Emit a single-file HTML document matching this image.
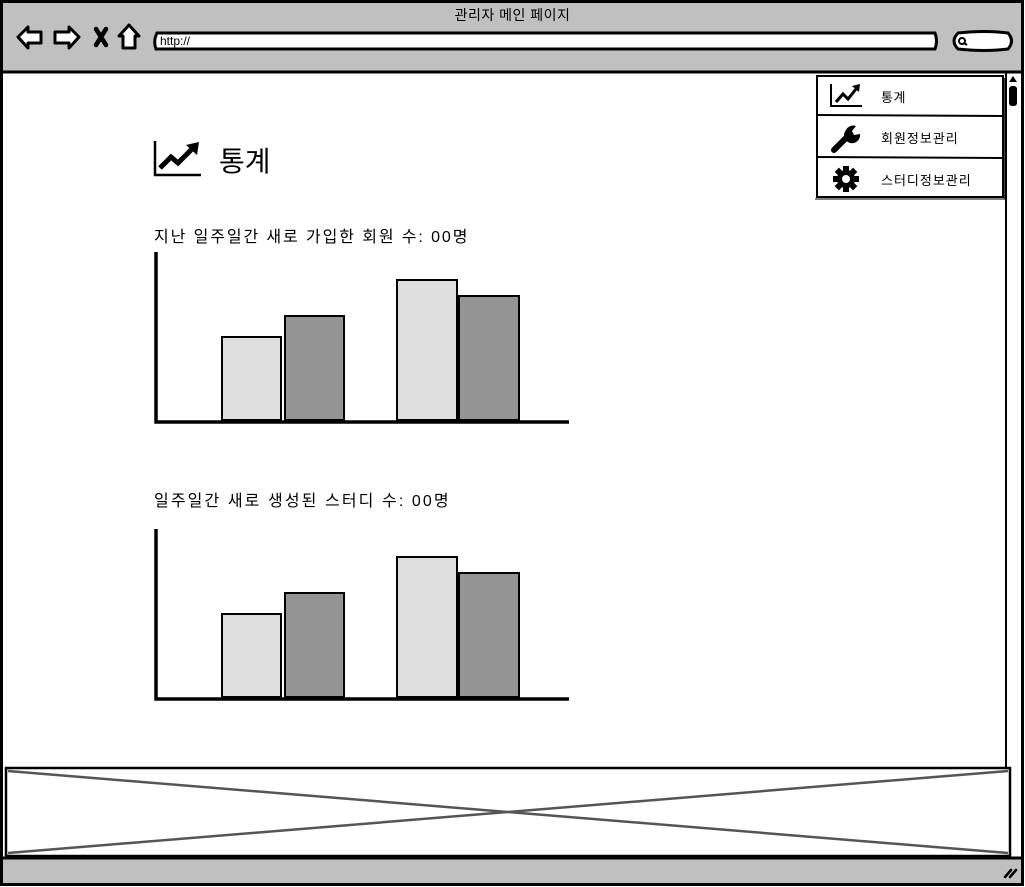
<!DOCTYPE html>
<html><head><meta charset="utf-8"><style>
html,body{margin:0;padding:0;background:#fff;}
body{width:1025px;height:887px;position:relative;overflow:hidden;font-family:"Liberation Sans","Noto Sans CJK KR",sans-serif;}
svg{position:absolute;left:0;top:0;}
.t{position:absolute;white-space:nowrap;color:#000;}
</style></head><body>
<svg width="1025" height="887" viewBox="0 0 1025 887">
<rect x="1.5" y="1.5" width="1021" height="883" fill="#fff" stroke="#000" stroke-width="3"/>
<rect x="3" y="3" width="1018" height="68" fill="#c0c0c0"/>
<line x1="2" y1="72" x2="1022" y2="72" stroke="#000" stroke-width="3"/>
<path d="M18 37 L28 27 L28 32 L41 32 L41 43 L28 43 L28 48 Z" fill="#fff" stroke="#000" stroke-width="3" stroke-linejoin="round"/>
<path d="M79 37 L69 27 L69 32 L55 32 L55 43 L69 43 L69 48 Z" fill="#fff" stroke="#000" stroke-width="3" stroke-linejoin="round"/>
<path d="M96 29 L106 45 M106 29 L96 45" stroke="#000" stroke-width="4.5" stroke-linecap="round"/>
<path d="M129 25 L119 36 L123 36 L123 48 L135 48 L135 36 L139 36 Z" fill="#fff" stroke="#000" stroke-width="3" stroke-linejoin="round"/>
<path d="M157 33 L935 33 Q938 41 935 49 L156 49 Q153 41 157 33 Z" fill="#fff" stroke="#000" stroke-width="3"/>
<path d="M958 33 Q985 30 1008 33 Q1015 41 1008 49 Q985 52 958 49 Q950 41 958 33 Z" fill="#fff" stroke="#000" stroke-width="3"/>
<circle cx="962" cy="41" r="3" fill="none" stroke="#000" stroke-width="2"/>
<line x1="964" y1="43" x2="967" y2="45" stroke="#000" stroke-width="2"/>
<line x1="1006" y1="73" x2="1006" y2="860" stroke="#000" stroke-width="2"/>
<path d="M1009 82 L1013 76 L1017 82 Z" fill="#000"/>
<rect x="1009" y="86" width="8" height="20" rx="3" fill="#000"/>
<rect x="3" y="859" width="1018" height="24" fill="#c0c0c0"/>
<line x1="2" y1="858" x2="1022" y2="858" stroke="#000" stroke-width="3"/>
<path d="M1005 877 L1011 870 M1010 877 L1016 870" stroke="#000" stroke-width="2.5" stroke-linecap="round"/>
<rect x="6" y="768" width="1004" height="88" fill="#fff" stroke="#000" stroke-width="2.5"/>
<path d="M8 771 L1008 853 M8 853 L1008 771" stroke="#555" stroke-width="2.5"/>
<rect x="817" y="76" width="186" height="121" fill="#fff" stroke="#000" stroke-width="2"/>
<line x1="1005" y1="78" x2="1005" y2="199" stroke="#000" stroke-width="1.5"/>
<line x1="815" y1="199" x2="1005" y2="199" stroke="#000" stroke-width="1"/>
<line x1="817" y1="115" x2="1003" y2="116" stroke="#000" stroke-width="2"/>
<line x1="817" y1="157" x2="1003" y2="158" stroke="#000" stroke-width="2"/>
<path d="M831 84 L831 106 L862 106" fill="none" stroke="#000" stroke-width="2"/>
<path d="M836 102 L843 94 L848 99 L856 89" fill="none" stroke="#000" stroke-width="3"/>
<path d="M852 86 L860 84 L859 92 Z" fill="#000"/>
<path d="M834 150 L848 136" stroke="#000" stroke-width="6" stroke-linecap="round"/>
<path d="M846 130 A8 8 0 1 0 860 134 L854 135 L852 131 L856 126 A8 8 0 0 0 846 130 Z" fill="#000"/>
<g transform="translate(846,179)">
<circle r="9" fill="#000"/>
<g fill="#000">
<rect x="-3" y="-13" width="6" height="26"/>
<rect x="-3" y="-13" width="6" height="26" transform="rotate(45)"/>
<rect x="-3" y="-13" width="6" height="26" transform="rotate(90)"/>
<rect x="-3" y="-13" width="6" height="26" transform="rotate(135)"/>
</g>
<circle r="4" fill="#fff"/>
</g>
<path d="M155 141 L155 175 L201 175" fill="none" stroke="#000" stroke-width="2.5"/>
<path d="M160 168 L171 157 L178 163 L192 149" fill="none" stroke="#000" stroke-width="5"/>
<path d="M186 145 L199 142 L197 155 Z" fill="#000"/>
<g>
<path d="M156 252 L156 422 L569 422" fill="none" stroke="#000" stroke-width="3.5"/>
<rect x="222" y="337" width="59" height="83" fill="#dedede" stroke="#000" stroke-width="2"/>
<rect x="285" y="316" width="59" height="104" fill="#949494" stroke="#000" stroke-width="2"/>
<rect x="397" y="280" width="60" height="140" fill="#dedede" stroke="#000" stroke-width="2"/>
<rect x="459" y="296" width="60" height="124" fill="#949494" stroke="#000" stroke-width="2"/>
</g>
<g transform="translate(0,277)">
<path d="M156 252 L156 422 L569 422" fill="none" stroke="#000" stroke-width="3.5"/>
<rect x="222" y="337" width="59" height="83" fill="#dedede" stroke="#000" stroke-width="2"/>
<rect x="285" y="316" width="59" height="104" fill="#949494" stroke="#000" stroke-width="2"/>
<rect x="397" y="280" width="60" height="140" fill="#dedede" stroke="#000" stroke-width="2"/>
<rect x="459" y="296" width="60" height="124" fill="#949494" stroke="#000" stroke-width="2"/>
</g>
</svg>
<div class="t" style="left:0;width:1025px;text-align:center;top:5px;font-size:14px;letter-spacing:0.5px;">관리자 메인 페이지</div>
<div class="t" style="left:160px;top:34px;font-size:12px;">http://</div>
<div class="t" style="left:881px;top:87px;font-size:13px;letter-spacing:0.5px;">통계</div>
<div class="t" style="left:881px;top:128px;font-size:13px;letter-spacing:1px;">회원정보관리</div>
<div class="t" style="left:881px;top:170px;font-size:13px;letter-spacing:1px;">스터디정보관리</div>
<div class="t" style="left:219px;top:140px;font-size:28px;">통계</div>
<div class="t" style="left:154px;top:223px;font-size:16px;letter-spacing:1.9px;">지난 일주일간 새로 가입한 회원 수: 00명</div>
<div class="t" style="left:154px;top:487px;font-size:16px;letter-spacing:2.1px;">일주일간 새로 생성된 스터디 수: 00명</div>
</body></html>
